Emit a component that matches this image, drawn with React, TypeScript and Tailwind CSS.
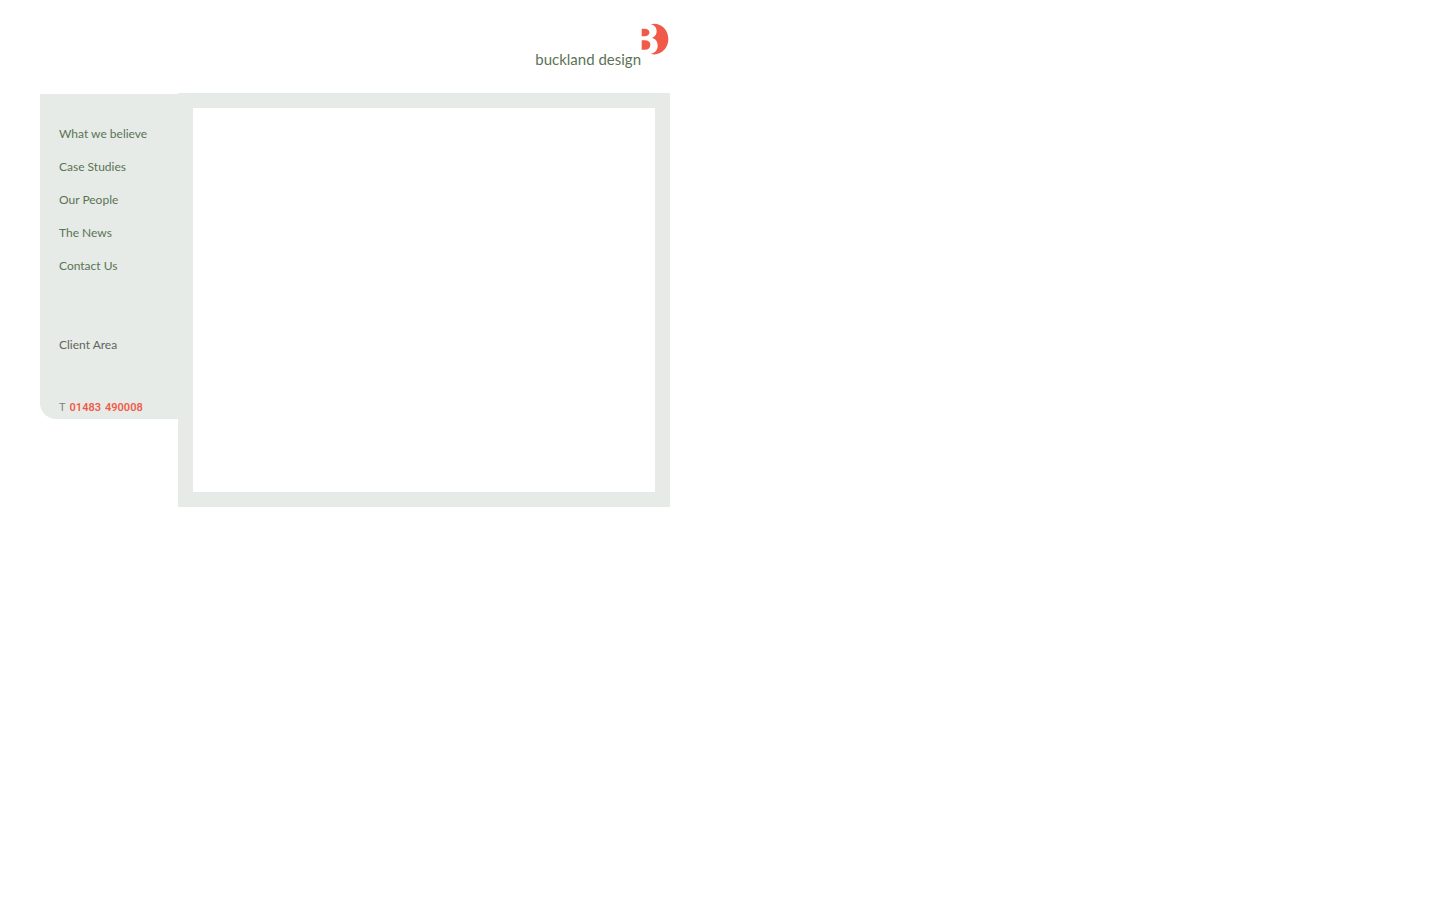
import React from 'react';

const navItems = [
  { label: 'What we believe', path: '#believe' },
  { label: 'Case Studies', path: '#case-studies' },
  { label: 'Our People', path: '#people' },
  { label: 'The News', path: '#news' },
  { label: 'Contact Us', path: '#contact' },
];

const LogoMark: React.FC = () => (
  <svg viewBox="0 0 84 96" className="h-8 w-7 shrink-0" fill="#f15a49" aria-hidden="true">
    {/* Crescent */}
    <path d="M28 4C37 1 47 2 56 6C72 13 82 29 82 48C82 68 71 84 55 91C46 95 37 95 29 92C42 90 50 81 50 68C50 56 45 48 33 45C42 41 47 35 47 25C47 13 40 6 28 4Z" />
    {/* Counters of the B */}
    <path d="M2 17H10C20 17 25 21 25 28C25 36 20 40 10 40H2Z" />
    <path d="M2 52H11C22 52 28 57 28 65C28 75 22 80 11 80H2Z" />
  </svg>
);

const Header: React.FC = () => (
  <header className="flex h-[93px] justify-end pt-[23px] pr-px">
    <a href="#home" className="flex items-start text-[#5b7355]">
      <span className="pt-[26px] text-[15px] leading-5">buckland design</span>
      <LogoMark />
    </a>
  </header>
);

const Sidebar: React.FC = () => (
  <aside className="mt-px w-[138px] shrink-0 rounded-bl-2xl bg-[#e6ebe7] pt-8 pb-[3px] pl-[19px] text-xs leading-4">
    <nav className="flex flex-col items-start gap-[17px] text-[#5b7355]">
      {navItems.map((item) => (
        <a key={item.path} href={item.path} className="hover:underline">
          {item.label}
        </a>
      ))}
    </nav>
    <a href="#client-area" className="mt-[63px] block text-[#5f6660] hover:underline">
      Client Area
    </a>
    <p className="mt-[47px] flex gap-1 font-['Roboto',sans-serif] text-[11px] text-[#7b837c]">
      <span>T</span>
      <a href="tel:01483490008" className="flex gap-1 font-semibold text-[#f15a49]">
        <span>01483</span>
        <span>490008</span>
      </a>
    </p>
  </aside>
);

export default function App() {
  return (
    <div className="min-h-screen bg-white font-['Lato',sans-serif]">
      <div className="w-full max-w-[670px] pl-10">
        <Header />
        <div className="flex items-start">
          <Sidebar />
          <main className="min-h-[414px] flex-1 border-[15px] border-[#e6ebe7] bg-white" />
        </div>
      </div>
    </div>
  );
}
